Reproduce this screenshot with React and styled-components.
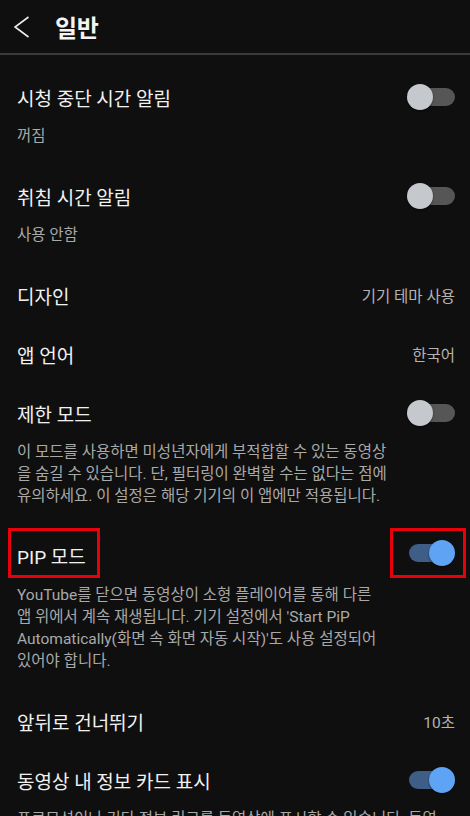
import React from 'react'
import styled, { createGlobalStyle } from 'styled-components';

const GlobalStyle = createGlobalStyle`
    html, body {
        margin: 0;
        padding: 0;
        background: #0f0f0f;
    }
    body {
        font-family: Roboto, "Noto Sans CJK KR", sans-serif;
        color: #f1f1f1;
    }
`;

const Screen = styled.div`
    width: 470px;
    height: 816px;
    overflow: hidden;
    background: #0f0f0f;
`;

const Header = styled.header`
    height: 53px;
    display: flex;
    align-items: center;
    padding: 0 14px;
    border-bottom: 2px solid #3a3a3a;
`;

const BackButton = styled.button`
    flex: 0 0 41px;
    background: none;
    border: 0;
    padding: 0;
    width: 41px;
    height: 22px;
    display: flex;
    align-items: center;
    justify-content: flex-start;
    color: #ececec;
    margin-top: 1px;
`;

const Title = styled.h1`
    margin: 0;
    font-size: 24px;
    font-weight: 700;
    color: #f4f4f4;
    letter-spacing: -0.3px;
`;

const List = styled.div`
    padding-top: 12px;
`;

const Item = styled.div`
    padding: 10px 15px ${({ $compact }) => ($compact ? '9px' : '19px')} 17px;
`;

const TitleRow = styled.div`
    display: flex;
    align-items: center;
    justify-content: space-between;
    min-height: 40px;
`;

const ItemTitle = styled.span`
    font-size: 19px;
    color: #f1f1f1;
`;

const Value = styled.span`
    font-size: 15.5px;
    color: #b3b3b3;
`;

const Sub = styled.div`
    margin-top: 8px;
    font-size: 15.5px;
    line-height: 22px;
    color: #a9a9a9;
    white-space: nowrap;
`;

const Mark = styled.span`
    box-sizing: border-box;
    display: inline-flex;
    align-items: center;
    height: 50px;
    border: 3px solid #e8000b;
    margin-top: -8px;
    margin-bottom: -2px;
`;

const TitleMark = styled(Mark)`
    width: 92px;
    margin-left: -9px;
    padding: 5px 0 0 6px;
`;

const SwitchMark = styled(Mark)`
    width: 76px;
    margin-right: -11px;
    justify-content: flex-end;
    padding-right: 8px;
`;

const SwitchBox = styled.span`
    position: relative;
    display: inline-block;
    width: 48px;
    height: 26px;
`;

const Track = styled.span`
    position: absolute;
    left: 2px;
    right: ${({ $on }) => ($on ? '5px' : '0')};
    top: 4px;
    height: 18px;
    border-radius: 9px;
    background: ${({ $on }) => ($on ? '#3e5d87' : '#565656')};
`;

const Knob = styled.span`
    position: absolute;
    top: 0;
    ${({ $on }) => ($on ? 'right: 0;' : 'left: 0;')}
    width: 26px;
    height: 26px;
    border-radius: 50%;
    background: ${({ $on }) => ($on ? '#5fa3f5' : '#c5c8cc')};
    box-shadow: 0 1px 2px rgba(0, 0, 0, 0.5);
`;

const Switch = ({ on }) => (
    <SwitchBox>
        <Track $on={on} />
        <Knob $on={on} />
    </SwitchBox>
)

const Chevron = () => (
    <svg width="16" height="22" viewBox="0 0 16 22" fill="none">
        <path d="M14.5 1 L1 11 L14.5 21" stroke="currentColor" strokeWidth="1.6" />
    </svg>
)

const App = () => {
    return (
        <Screen>
            <GlobalStyle />
            <Header>
                <BackButton><Chevron /></BackButton>
                <Title>일반</Title>
            </Header>
            <List>
                <Item>
                    <TitleRow>
                        <ItemTitle>시청 중단 시간 알림</ItemTitle>
                        <Switch />
                    </TitleRow>
                    <Sub>꺼짐</Sub>
                </Item>
                <Item>
                    <TitleRow>
                        <ItemTitle>취침 시간 알림</ItemTitle>
                        <Switch />
                    </TitleRow>
                    <Sub>사용 안함</Sub>
                </Item>
                <Item $compact>
                    <TitleRow>
                        <ItemTitle>디자인</ItemTitle>
                        <Value>기기 테마 사용</Value>
                    </TitleRow>
                </Item>
                <Item $compact>
                    <TitleRow>
                        <ItemTitle>앱 언어</ItemTitle>
                        <Value>한국어</Value>
                    </TitleRow>
                </Item>
                <Item>
                    <TitleRow>
                        <ItemTitle>제한 모드</ItemTitle>
                        <Switch />
                    </TitleRow>
                    <Sub>
                        이 모드를 사용하면 미성년자에게 부적합할 수 있는 동영상<br />
                        을 숨길 수 있습니다. 단, 필터링이 완벽할 수는 없다는 점에<br />
                        유의하세요. 이 설정은 해당 기기의 이 앱에만 적용됩니다.
                    </Sub>
                </Item>
                <Item>
                    <TitleRow>
                        <TitleMark><ItemTitle>PIP 모드</ItemTitle></TitleMark>
                        <SwitchMark><Switch on /></SwitchMark>
                    </TitleRow>
                    <Sub>
                        YouTube를 닫으면 동영상이 소형 플레이어를 통해 다른<br />
                        앱 위에서 계속 재생됩니다. 기기 설정에서 'Start PiP<br />
                        Automatically(화면 속 화면 자동 시작)'도 사용 설정되어<br />
                        있어야 합니다.
                    </Sub>
                </Item>
                <Item $compact>
                    <TitleRow>
                        <ItemTitle>앞뒤로 건너뛰기</ItemTitle>
                        <Value>10초</Value>
                    </TitleRow>
                </Item>
                <Item>
                    <TitleRow>
                        <ItemTitle>동영상 내 정보 카드 표시</ItemTitle>
                        <Switch on />
                    </TitleRow>
                    <Sub>
                        프로모션이나 기타 정보 링크를 동영상에 표시할 수 있습니다. 동영<br />
                        상 제작자가 추가한 카드입니다.
                    </Sub>
                </Item>
            </List>
        </Screen>
    )
}
export default App
